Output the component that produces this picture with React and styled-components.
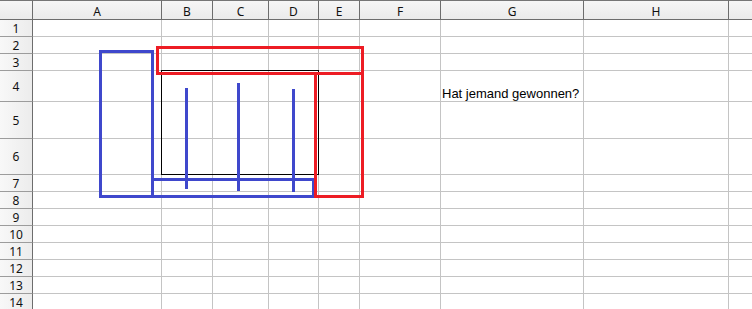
import { Fragment } from "react";
import styled, { createGlobalStyle } from "styled-components";

const GlobalStyle = createGlobalStyle`
  html, body {
    margin: 0;
    padding: 0;
    background: #ffffff;
    overflow: hidden;
  }
`;

const COLS = ["A", "B", "C", "D", "E", "F", "G", "H", ""];
const ROW_HEIGHTS = [17, 17, 17, 31, 37, 36, 17, 17, 17, 17, 17, 17, 17, 17];

const Wrap = styled.div`
  position: relative;
  width: 752px;
  height: 309px;
  overflow: hidden;
`;

const Sheet = styled.div`
  display: grid;
  grid-template-columns: 33px 129px 51px 56px 50px 41px 81px 143px 145px 1fr;
  grid-template-rows: 20px ${ROW_HEIGHTS.map((h) => h + "px").join(" ")};
  font-family: "Noto Sans", "Liberation Sans", sans-serif;
`;

const ColHead = styled.div`
  box-sizing: border-box;
  border-top: 1px solid #767676;
  border-bottom: 1px solid #6d6d6d;
  border-right: ${(p) => (p.$last ? "none" : "1px solid #6d6d6d")};
  background: linear-gradient(#f6f6f6, #ebebeb);
  display: flex;
  align-items: center;
  justify-content: center;
  padding-top: 2px;
  font-size: 12px;
  color: #111;
`;

const RowHead = styled.div`
  box-sizing: border-box;
  border-right: 1px solid #6d6d6d;
  border-bottom: 1px solid #9c9c9c;
  background: linear-gradient(90deg, #f8f8f8, #ececec);
  display: flex;
  align-items: center;
  justify-content: center;
  font-size: 12px;
  color: #111;
`;

const Cell = styled.div`
  box-sizing: border-box;
  border-right: ${(p) => (p.$last ? "none" : "1px solid #c4c4c4")};
  border-bottom: 1px solid #c4c4c4;
  display: flex;
  align-items: flex-end;
  padding-left: 1px;
  font-family: "Liberation Sans", Arial, sans-serif;
  font-size: 13px;
  line-height: 15px;
  color: #000;
  white-space: nowrap;
`;

const Drawing = styled.svg`
  position: absolute;
  left: 0;
  top: 0;
  pointer-events: none;
`;

const BLUE = "#3f48cc";
const RED = "#ed1c24";

const cellText = (row, col) => (row === 4 && col === "G" ? "Hat jemand gewonnen?" : "");

const App = () => {
  return (
    <>
      <GlobalStyle />
      <Wrap>
        <Sheet>
          <ColHead />
          {COLS.map((c, i) => (
            <ColHead key={"h" + i} $last={i === COLS.length - 1}>
              {c}
            </ColHead>
          ))}
          {ROW_HEIGHTS.map((_, r) => (
            <Fragment key={"r" + r}>
              <RowHead>{r + 1}</RowHead>
              {COLS.map((c, i) => (
                <Cell key={r + "-" + i} $last={i === COLS.length - 1}>
                  {cellText(r + 1, c)}
                </Cell>
              ))}
            </Fragment>
          ))}
        </Sheet>
        {/* Zeichnungsobjekte über dem Tabellenblatt */}
        <Drawing width="752" height="309" viewBox="0 0 752 309">
          <rect x="161.5" y="70.5" width="157" height="104" fill="none" stroke="#000" strokeWidth="1" />
          <rect x="100.5" y="51.5" width="52" height="145" fill="none" stroke={BLUE} strokeWidth="3" />
          <rect x="152.5" y="179.5" width="161" height="17" fill="none" stroke={BLUE} strokeWidth="3" />
          <line x1="186.5" y1="88" x2="186.5" y2="189" stroke={BLUE} strokeWidth="3" />
          <line x1="238.5" y1="83" x2="238.5" y2="191" stroke={BLUE} strokeWidth="3" />
          <line x1="293.5" y1="89" x2="293.5" y2="192" stroke={BLUE} strokeWidth="3" />
          <rect x="157.5" y="47.5" width="205" height="26" fill="none" stroke={RED} strokeWidth="3" />
          <rect x="315.5" y="73.5" width="47" height="123" fill="none" stroke={RED} strokeWidth="3" />
        </Drawing>
      </Wrap>
    </>
  );
};

export default App;
